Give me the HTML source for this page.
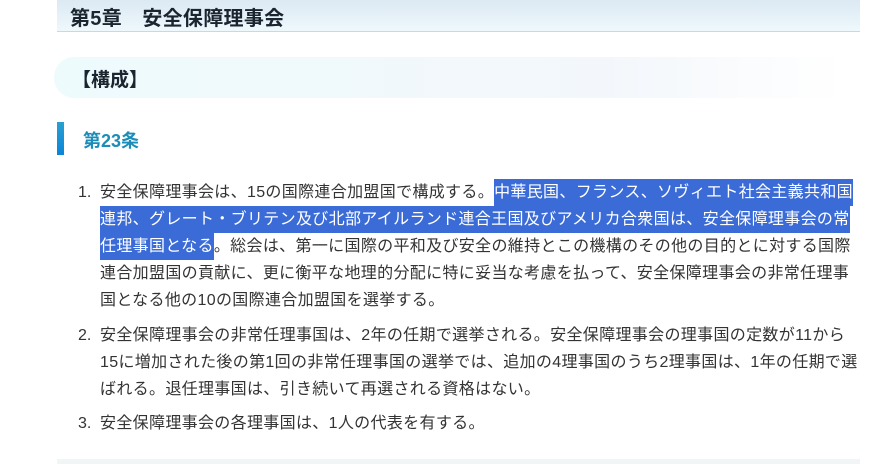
<!DOCTYPE html>
<html><head><meta charset="utf-8"><style>
body{margin:0;width:883px;height:464px;background:#fff;font-family:"Liberation Sans","Noto Sans CJK JP",sans-serif;overflow:hidden;position:relative;color:#333}
.h1{position:absolute;left:57px;top:0;width:803px;height:31px;background:linear-gradient(#dce9f3,#eef8fc);border-bottom:1px solid #d3d6d9}
.h1 span{position:absolute;left:13px;top:2px;font-size:20px;font-weight:bold;color:#1a2530;letter-spacing:0.3px}
.h2{position:absolute;left:54px;top:57px;width:790px;height:41px;border-radius:20px 0 0 20px;background:linear-gradient(90deg,#eefbfd,#f3f7fb 70%,#fff)}
.h2 span{position:absolute;left:18px;top:8px;font-size:19px;font-weight:bold;color:#1a2530}
.bar{position:absolute;left:57px;top:122px;width:7px;height:33px;background:linear-gradient(#2aa0d0,#0a85d8)}
.h3{position:absolute;left:83px;top:127px;font-size:18px;font-weight:bold;color:#1b8db8}
.l{position:absolute;left:100px;font-size:16px;line-height:27px;height:27px;white-space:nowrap;color:#333;letter-spacing:0.33px}
.n{position:absolute;left:78px;font-size:16px;line-height:27px;color:#333}
.hl{background:#3a6bd6;color:#fff;display:inline-block;height:27px}
.foot{position:absolute;left:57px;top:459px;width:803px;height:5px;background:#f1f5f6}
</style></head><body>
<div class="h1"><span>第5章　安全保障理事会</span></div>
<div class="h2"><span>【構成】</span></div>
<div class="bar"></div>
<div class="h3">第23条</div>
<div class="n" style="top:179px">1.</div>
<div class="l" style="top:179px">安全保障理事会は、15の国際連合加盟国で構成する。<span class="hl">中華民国、フランス、ソヴィエト社会主義共和国</span></div>
<div class="l" style="top:206px"><span class="hl">連邦、グレート・ブリテン及び北部アイルランド連合王国及びアメリカ合衆国は、安全保障理事会の常</span></div>
<div class="l" style="top:233px"><span class="hl">任理事国となる</span>。総会は、第一に国際の平和及び安全の維持とこの機構のその他の目的とに対する国際</div>
<div class="l" style="top:260px">連合加盟国の貢献に、更に衡平な地理的分配に特に妥当な考慮を払って、安全保障理事会の非常任理事</div>
<div class="l" style="top:287px">国となる他の10の国際連合加盟国を選挙する。</div>
<div class="n" style="top:322px">2.</div>
<div class="l" style="top:322px">安全保障理事会の非常任理事国は、2年の任期で選挙される。安全保障理事会の理事国の定数が11から</div>
<div class="l" style="top:349px">15に増加された後の第1回の非常任理事国の選挙では、追加の4理事国のうち2理事国は、1年の任期で選</div>
<div class="l" style="top:376px">ばれる。退任理事国は、引き続いて再選される資格はない。</div>
<div class="n" style="top:410px">3.</div>
<div class="l" style="top:410px">安全保障理事会の各理事国は、1人の代表を有する。</div>
<div class="foot"></div>
</body></html>
